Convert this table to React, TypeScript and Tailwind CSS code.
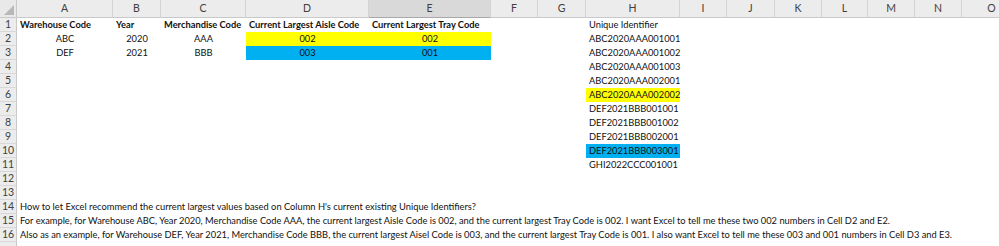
import React from "react";

type Cell = { t: string; a?: "l" | "c"; b?: boolean; bg?: "y" | "bl" };

const cols = ["A", "B", "C", "D", "E", "F", "G", "H", "I", "J", "K", "L", "M", "N", "O"];

const ids = [
  "Unique Identifier",
  "ABC2020AAA001001",
  "ABC2020AAA001002",
  "ABC2020AAA001003",
  "ABC2020AAA002001",
  "ABC2020AAA002002",
  "DEF2021BBB001001",
  "DEF2021BBB001002",
  "DEF2021BBB002001",
  "DEF2021BBB003001",
  "GHI2022CCC001001",
];

const rows: Record<number, Record<string, Cell>> = {
  1: {
    A: { t: "Warehouse Code", b: true },
    B: { t: "Year", b: true },
    C: { t: "Merchandise Code", b: true },
    D: { t: "Current Largest Aisle Code", b: true },
    E: { t: "Current Largest Tray Code", b: true },
  },
  2: {
    A: { t: "ABC", a: "c" },
    B: { t: "2020", a: "c" },
    C: { t: "AAA", a: "c" },
    D: { t: "002", a: "c", bg: "y" },
    E: { t: "002", a: "c", bg: "y" },
  },
  3: {
    A: { t: "DEF", a: "c" },
    B: { t: "2021", a: "c" },
    C: { t: "BBB", a: "c" },
    D: { t: "003", a: "c", bg: "bl" },
    E: { t: "001", a: "c", bg: "bl" },
  },
  14: { A: { t: "How to let Excel recommend the current largest values based on Column H's current existing Unique Identifiers?" } },
  15: {
    A: {
      t: "For example, for Warehouse ABC, Year 2020, Merchandise Code AAA, the current largest Aisle Code is 002, and the current largest Tray Code is 002. I want Excel to tell me these two 002 numbers in Cell D2 and E2.",
    },
  },
  16: {
    A: {
      t: "Also as an example, for Warehouse DEF, Year 2021, Merchandise Code BBB, the current largest Aisel Code is 003, and the current largest Tray Code is 001. I also want Excel to tell me these 003 and 001 numbers in Cell D3 and E3.",
    },
  },
};

ids.forEach((t, i) => {
  const r = i + 1;
  rows[r] = rows[r] || {};
  rows[r].H = { t, bg: r === 6 ? "y" : r === 10 ? "bl" : undefined };
});

function CellView({ c }: { c?: Cell }) {
  if (!c) return <div className="h-[14px]" />;
  const bg = c.bg === "y" ? "bg-[#ffff00]" : c.bg === "bl" ? "bg-[#00b0f0]" : "";
  const align = c.a === "c" ? "justify-center" : "justify-start pl-[3px]";
  const weight = c.b ? "font-bold" : "font-normal";
  return (
    <div className={`relative flex h-[14px] items-center overflow-visible whitespace-nowrap ${bg} ${align} ${weight}`}>
      <span className="leading-[14px]">{c.t}</span>
    </div>
  );
}

export default function App() {
  const rowNums = Array.from({ length: 17 }, (_, i) => i + 1);
  return (
    <div className="h-[246px] w-[999px] overflow-hidden bg-white text-[9.3px] text-[#111]" style={{ fontFamily: "Lato, sans-serif" }}>
      <div className="grid grid-cols-[17px_96px_48px_85px_123px_122px_47px_48px_94px_47px_48px_47px_46px_47px_47px_60px]">
        <div className="relative h-[18px] border-b border-r border-[#c9c9c9] bg-[#e9e9e9]">
          <svg className="absolute bottom-[2px] right-[2px]" width="10" height="10" viewBox="0 0 10 10">
            <polygon points="10,0 10,10 0,10" fill="#b8b8b8" />
          </svg>
        </div>
        {cols.map((c) => (
          <div
            key={c}
            className={`flex h-[18px] items-center justify-center border-b border-r text-[10.5px] text-[#404040] ${
              c === "E" ? "border-b-[#a8a8a8] border-r-[#d4d4d4] bg-[#d9d9d9]" : "border-b-[#c9c9c9] border-r-[#d4d4d4] bg-[#ececec]"
            }`}
          >
            {c}
          </div>
        ))}
        {rowNums.map((r) => (
          <React.Fragment key={r}>
            <div className="flex h-[14px] items-center justify-center border-b border-r border-b-[#d8d8d8] border-r-[#c9c9c9] bg-[#ececec] text-[10.5px] leading-none text-[#404040]">
              {r < 17 ? r : ""}
            </div>
            {cols.map((c) => (
              <CellView key={c} c={rows[r]?.[c]} />
            ))}
          </React.Fragment>
        ))}
      </div>
    </div>
  );
}
